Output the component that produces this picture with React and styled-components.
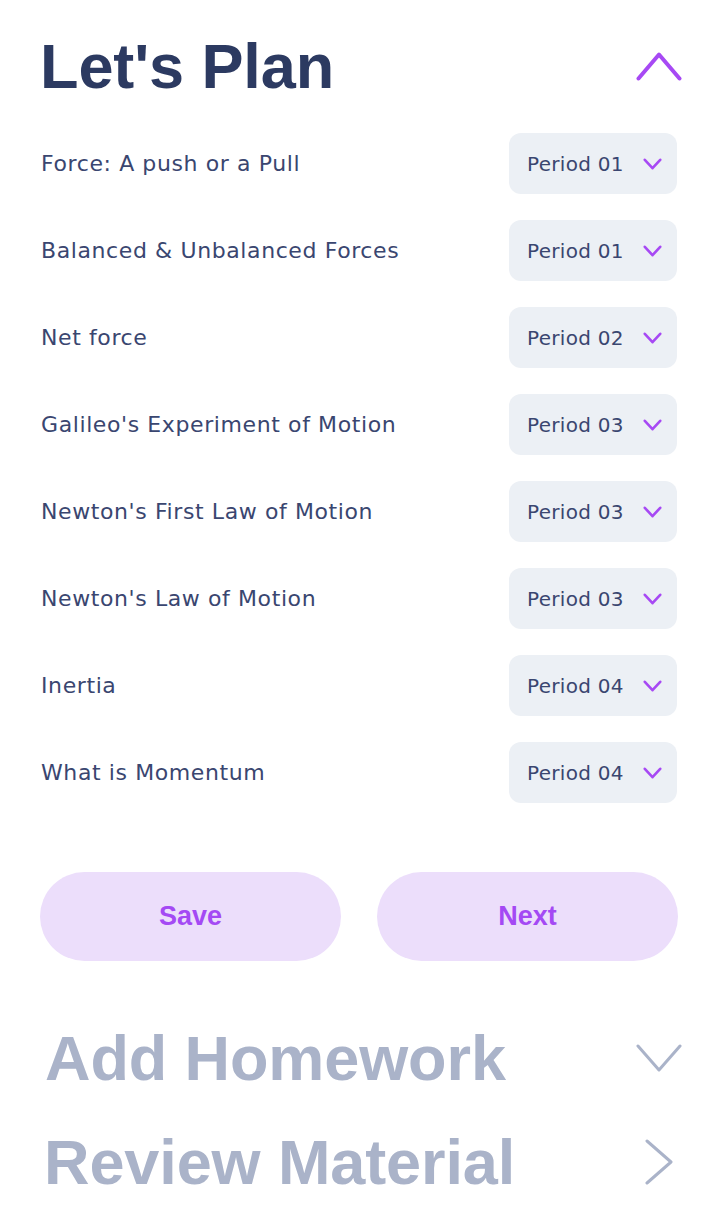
import React from 'react'
import styled, { createGlobalStyle } from 'styled-components'

const topics = [
  { title: 'Force: A push or a Pull', period: 'Period 01' },
  { title: 'Balanced & Unbalanced Forces', period: 'Period 01' },
  { title: 'Net force', period: 'Period 02' },
  { title: "Galileo's Experiment of Motion", period: 'Period 03' },
  { title: "Newton's First Law of Motion", period: 'Period 03' },
  { title: "Newton's Law of Motion", period: 'Period 03' },
  { title: 'Inertia', period: 'Period 04' },
  { title: 'What is Momentum', period: 'Period 04' },
]

// chevrons drawn as open strokes; w/h are the box the stroke spans
const Chevron = ({ dir = 'down', color, w, h, stroke = 3 }) => {
  const p = stroke / 2 + 0.5
  const d = {
    up: `M${p} ${h - p} L${w / 2} ${p} L${w - p} ${h - p}`,
    down: `M${p} ${p} L${w / 2} ${h - p} L${w - p} ${p}`,
    right: `M${p} ${p} L${w - p} ${h / 2} L${p} ${h - p}`,
  }[dir]
  return (
    <svg width={w} height={h} viewBox={`0 0 ${w} ${h}`} fill="none">
      <path d={d} stroke={color} strokeWidth={stroke} strokeLinecap="round" strokeLinejoin="round" />
    </svg>
  )
}

const App = () => {
  return (
    <>
      <GlobalStyle />
      <Page>
        <SectionHeader>
          <Title>Let's Plan</Title>
          <IconSlot>
            <Chevron dir="up" color="#a749f4" w={46} h={29} stroke={4} />
          </IconSlot>
        </SectionHeader>

        <TopicList>
          {topics.map((t, i) => (
            <TopicRow key={i}>
              <TopicName>{t.title}</TopicName>
              <PeriodSelect>
                <span>{t.period}</span>
                <Chevron dir="down" color="#a749f4" w={19} h={12} stroke={2.6} />
              </PeriodSelect>
            </TopicRow>
          ))}
        </TopicList>

        <Actions>
          <PillButton>Save</PillButton>
          <PillButton>Next</PillButton>
        </Actions>

        <CollapsedSection $indent="5px" $top="57px">
          <Title $muted>Add Homework</Title>
          <IconSlot>
            <Chevron dir="down" color="#aab3c9" w={46} h={28} stroke={3} />
          </IconSlot>
        </CollapsedSection>
        <CollapsedSection $indent="4px" $top="24px">
          <Title $muted>Review Material</Title>
          <IconSlot $pad="9px">
            <Chevron dir="right" color="#aab3c9" w={28} h={46} stroke={3} />
          </IconSlot>
        </CollapsedSection>
        <Fade />
      </Page>
    </>
  )
}

export default App

const GlobalStyle = createGlobalStyle`
  html, body {
    margin: 0;
    padding: 0;
    background: #ffffff;
  }
  body {
    font-family: "Liberation Sans", Arial, sans-serif;
  }
`

const Page = styled.div`
  width: 719px;
  box-sizing: border-box;
  padding: 26px 37px 0 40px;
  display: flex;
  flex-direction: column;
`

const SectionHeader = styled.div`
  display: flex;
  justify-content: space-between;
  align-items: center;
`

const Title = styled.h1`
  margin: 0;
  font-family: "Liberation Sans", Arial, sans-serif;
  font-weight: 700;
  font-size: 63px;
  line-height: 80px;
  letter-spacing: -0.1px;
  color: ${({ $muted }) => ($muted ? '#aab3c9' : '#2c3a61')};
`

const IconSlot = styled.div`
  display: flex;
  align-items: center;
  justify-content: flex-end;
  width: 48px;
  height: 48px;
  padding-right: ${({ $pad }) => $pad || '0'};
`

const TopicList = styled.div`
  display: flex;
  flex-direction: column;
  gap: 26px;
  margin-top: 27px;
  padding-right: 5px;
`

const TopicRow = styled.div`
  display: flex;
  justify-content: space-between;
  align-items: center;
  height: 61px;
`

const TopicName = styled.div`
  padding-left: 1px;
  font-family: "DejaVu Sans", "Noto Sans", sans-serif;
  font-size: 22px;
  letter-spacing: 0.6px;
  color: #3a4670;
`

const PeriodSelect = styled.div`
  width: 168px;
  height: 61px;
  box-sizing: border-box;
  padding: 0 15px 0 18px;
  border-radius: 12px;
  background: #ecf0f5;
  display: flex;
  align-items: center;
  justify-content: space-between;
  font-family: "DejaVu Sans", "Noto Sans", sans-serif;
  font-size: 20px;
  letter-spacing: 0.3px;
  color: #3a4670;
`

const Actions = styled.div`
  display: grid;
  grid-template-columns: 1fr 1fr;
  gap: 36px;
  margin-top: 69px;
  padding-right: 4px;
`

const PillButton = styled.button`
  height: 89px;
  border: none;
  border-radius: 45px;
  background: #ecdefb;
  color: #a449f4;
  font-family: "Liberation Sans", Arial, sans-serif;
  font-weight: 700;
  font-size: 27px;
  cursor: pointer;
`

const CollapsedSection = styled(SectionHeader)`
  margin-top: ${({ $top }) => $top};
  padding-left: ${({ $indent }) => $indent};
`

const Fade = styled.div`
  height: 12px;
  margin: 13px -37px 0 -40px;
  background: linear-gradient(#ffffff, #f6f7fa);
`
